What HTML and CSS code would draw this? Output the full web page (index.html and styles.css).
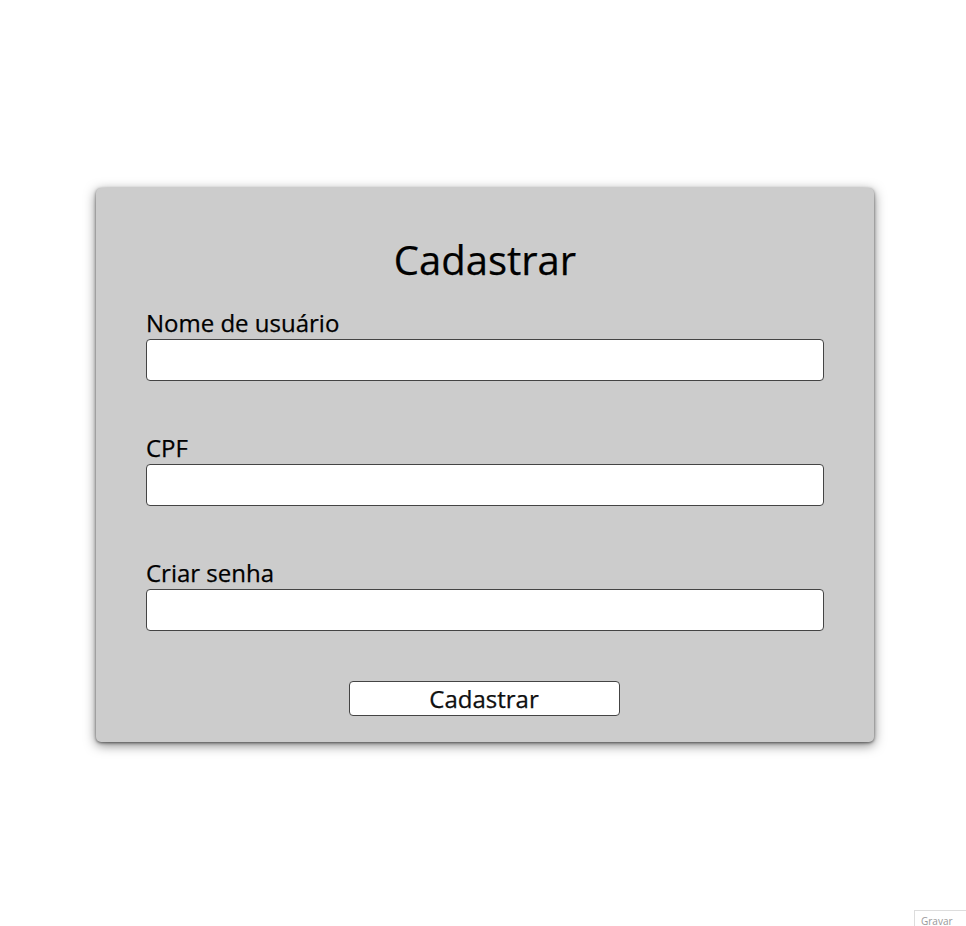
FILE: index.html
```
<!DOCTYPE html>
<html lang="pt-BR">
<head>
<meta charset="utf-8">
<title>Cadastrar</title>
<link rel="stylesheet" href="styles.css">
</head>
<body>
<main class="card">
  <h1 class="title">Cadastrar</h1>
  <form class="form">
    <div class="field">
      <label class="label" for="nome">Nome de usuário</label>
      <input class="input" id="nome" type="text">
    </div>
    <div class="field">
      <label class="label" for="cpf">CPF</label>
      <input class="input" id="cpf" type="text">
    </div>
    <div class="field">
      <label class="label" for="senha">Criar senha</label>
      <input class="input" id="senha" type="password">
    </div>
    <button class="btn" type="button">Cadastrar</button>
  </form>
</main>
<div class="badge">Gravar</div>
</body>
</html>
```
FILE: styles.css
```
html, body {
  margin: 0;
  padding: 0;
  background: #fff;
}
body {
  font-family: "Open Sans", "Noto Sans", sans-serif;
  color: #000;
  padding-top: 188px;
  height: 926px;
  box-sizing: border-box;
  overflow: hidden;
}
.card {
  width: 778px;
  height: 554px;
  margin-left: 96px;
  box-sizing: border-box;
  padding: 45px 50px 0;
  background: #cccccc;
  border-radius: 5px;
  box-shadow: 0 1px 3px rgba(0,0,0,0.5), 0 3px 12px rgba(0,0,0,0.5);
  -webkit-text-stroke: 0.25px #000;
}
.title {
  margin: 0 0 19px;
  font-size: 40px;
  font-weight: 400;
  line-height: 54px;
  text-align: center;
}
.form {
  display: flex;
  flex-direction: column;
  gap: 50px;
}
.field {
  display: flex;
  flex-direction: column;
}
.label {
  font-size: 24px;
  line-height: 33px;
}
.input {
  box-sizing: border-box;
  width: 678px;
  height: 42px;
  margin: 0;
  border: 1px solid #444;
  border-radius: 4px;
  background: #fff;
  font: inherit;
}
.btn {
  align-self: center;
  box-sizing: border-box;
  width: 271px;
  height: 35px;
  margin: 0 0 0 -2px;
  padding: 0;
  border: 1px solid #444;
  border-radius: 4px;
  background: #fff;
  font-family: inherit;
  font-size: 24px;
  line-height: 32px;
  color: #111;
}
.badge {
  position: fixed;
  left: 914px;
  top: 910px;
  width: 120px;
  height: 40px;
  box-sizing: border-box;
  border: 1px solid #ddd;
  padding: 5px 0 0 6px;
  font-size: 10px;
  line-height: 11px;
  color: #999;
  background: #fff;
}
```
